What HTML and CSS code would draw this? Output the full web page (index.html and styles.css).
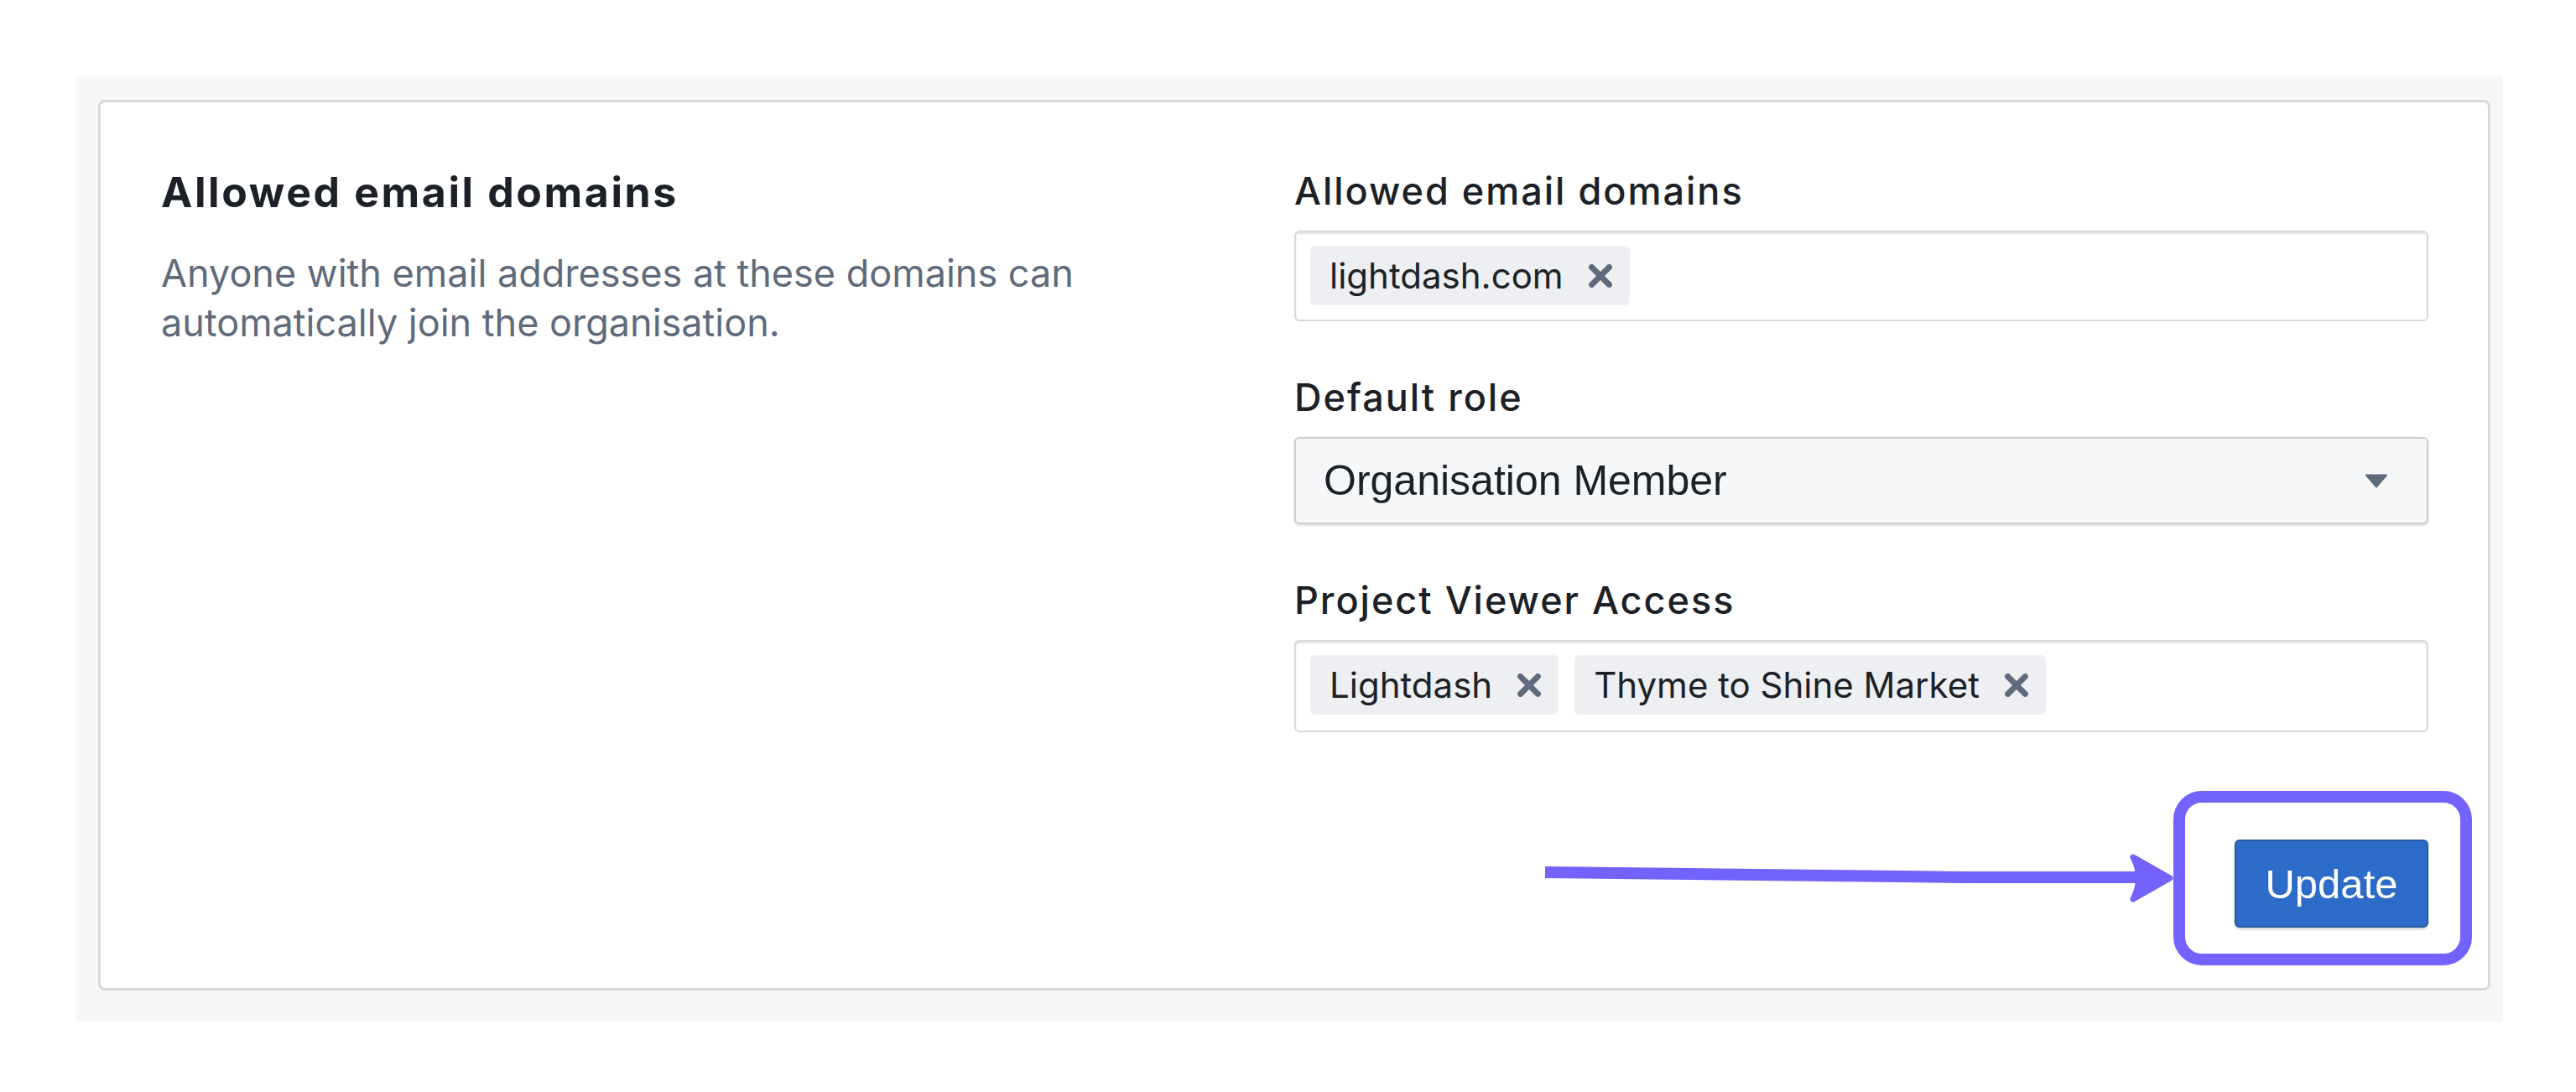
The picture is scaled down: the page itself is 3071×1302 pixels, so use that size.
FILE: index.html
```html
<!DOCTYPE html>
<html lang="en">
<head>
<meta charset="utf-8">
<title>Allowed email domains</title>
<link rel="stylesheet" href="styles.css">
</head>
<body>
<div class="page">
  <div class="panel">
    <div class="card">
      <div class="intro">
        <h5 class="title">Allowed email domains</h5>
        <p class="desc">Anyone with email addresses at these domains can automatically join the organisation.</p>
      </div>
      <div class="form">
        <div class="group">
          <label class="label">Allowed email domains</label>
          <div class="tag-input">
            <span class="tag"><span class="tag-text">lightdash.com</span><svg class="tag-x" viewBox="4 4 8 8"><path d="M9.41 8l2.29-2.29c.19-.18.3-.43.3-.71a1.003 1.003 0 00-1.71-.71L8 6.59l-2.29-2.3a1.003 1.003 0 00-1.42 1.42L6.59 8 4.3 10.29c-.19.18-.3.43-.3.71a1.003 1.003 0 001.71.71L8 9.41l2.29 2.29c.18.19.43.3.71.3a1.003 1.003 0 00.71-1.71L9.41 8z"/></svg></span>
          </div>
        </div>
        <div class="group">
          <label class="label">Default role</label>
          <div class="select">
            <span class="select-text">Organisation Member</span>
            <svg class="caret" viewBox="0 0 28 17"><path d="M2 1.5 H26 L14 15.5 Z"/></svg>
          </div>
        </div>
        <div class="group">
          <label class="label">Project Viewer Access</label>
          <div class="tag-input tag-input-tall">
            <span class="tag"><span class="tag-text">Lightdash</span><svg class="tag-x" viewBox="4 4 8 8"><path d="M9.41 8l2.29-2.29c.19-.18.3-.43.3-.71a1.003 1.003 0 00-1.71-.71L8 6.59l-2.29-2.3a1.003 1.003 0 00-1.42 1.42L6.59 8 4.3 10.29c-.19.18-.3.43-.3.71a1.003 1.003 0 001.71.71L8 9.41l2.29 2.29c.18.19.43.3.71.3a1.003 1.003 0 00.71-1.71L9.41 8z"/></svg></span>
            <span class="tag"><span class="tag-text">Thyme to Shine Market</span><svg class="tag-x" viewBox="4 4 8 8"><path d="M9.41 8l2.29-2.29c.19-.18.3-.43.3-.71a1.003 1.003 0 00-1.71-.71L8 6.59l-2.29-2.3a1.003 1.003 0 00-1.42 1.42L6.59 8 4.3 10.29c-.19.18-.3.43-.3.71a1.003 1.003 0 001.71.71L8 9.41l2.29 2.29c.18.19.43.3.71.3a1.003 1.003 0 00.71-1.71L9.41 8z"/></svg></span>
          </div>
        </div>
        <div class="actions">
          <button class="btn" type="button">Update</button>
        </div>
      </div>
    </div>
  </div>
  <svg class="annot" width="3071" height="1302" viewBox="0 0 3071 1302">
    <rect x="2598" y="950" width="342" height="194" rx="27" ry="27" fill="none" stroke="#7462fc" stroke-width="14"/>
    <path d="M1842 1040 L2340 1046 L2556 1046" fill="none" stroke="#7462fc" stroke-width="14"/>
    <path d="M2543 1022 L2587 1047 L2543 1072 Q2556 1047 2543 1022 Z" fill="#7462fc" stroke="#7462fc" stroke-width="7" stroke-linejoin="round"/>
  </svg>
</div>
</body>
</html>
```
FILE: styles.css
```css
html, body {
  margin: 0;
  padding: 0;
  background: #ffffff;
}

.page {
  position: relative;
  width: 3071px;
  height: 1302px;
  overflow: hidden;
  font-family: Inter, "Noto Sans", sans-serif;
  color: #1c2127;
}

.panel {
  margin: 90px 87px 0 91px;
  background: #f6f7f9;
  padding: 29px 15px 37px 26px;
}

.card {
  background: #ffffff;
  border: 3px solid #d6d8dc;
  border-radius: 8px;
  padding: 70px 71px 72px 72px;
  display: grid;
  grid-template-columns: 1fr 1352px;
  column-gap: 150px;
}

.intro {
  padding-top: 7px;
}

.title {
  margin: 0;
  font-size: 50px;
  line-height: 60px;
  font-weight: 700;
  letter-spacing: 2.6px;
  color: #1c2127;
}

.desc {
  margin: 37px 0 0;
  font-size: 45px;
  line-height: 59px;
  font-weight: 400;
  color: #5f6b7c;
}

.form {
  padding-top: 6px;
}

.group + .group {
  margin-top: 61px;
}

.label {
  display: block;
  font-size: 45px;
  line-height: 60px;
  font-weight: 500;
  letter-spacing: 2px;
  color: #1c2127;
  margin-bottom: 17px;
}

.tag-input {
  box-sizing: border-box;
  height: 108px;
  border: 2px solid #d6d9dd;
  border-radius: 6px;
  box-shadow: inset 0 2px 2px rgba(17, 20, 24, 0.12);
  background: #ffffff;
  display: flex;
  align-items: flex-start;
  gap: 19px;
  padding: 16px 17px;
}

.tag-input-tall {
  height: 110px;
}

.tag {
  display: inline-flex;
  align-items: center;
  height: 71px;
  box-sizing: border-box;
  padding: 0 21px 0 23px;
  background: #edeff2;
  border-radius: 6px;
  gap: 30px;
  font-size: 42px;
  color: #1c2127;
  white-space: nowrap;
}

.tag-x {
  width: 28px;
  height: 28px;
  fill: #5f6b7c;
  flex: none;
}

.select {
  box-sizing: border-box;
  height: 104px;
  border: 2px solid #c9cdd2;
  border-radius: 6px;
  background: #f6f7f9;
  box-shadow: 0 2px 3px rgba(17, 20, 24, 0.14);
  display: flex;
  align-items: center;
  justify-content: space-between;
  padding: 0 46px 0 33px;
  font-family: "Liberation Sans", Arial, sans-serif;
  font-size: 50px;
  color: #1c2127;
}

.caret {
  width: 28px;
  height: 17px;
  fill: #5f6b7c;
  stroke: #5f6b7c;
  stroke-width: 2;
  stroke-linejoin: round;
}

.actions {
  display: flex;
  justify-content: flex-end;
  margin-top: 128px;
}

.btn {
  width: 231px;
  height: 105px;
  border: 0;
  border-radius: 6px;
  background: #2d6bc8;
  color: #ffffff;
  font-family: "Liberation Sans", Arial, sans-serif;
  font-size: 49px;
  padding: 0;
  box-shadow: inset 0 0 0 2px rgba(17, 20, 24, 0.22), 0 2px 3px rgba(17, 20, 24, 0.2);
}

.annot {
  position: absolute;
  left: 0;
  top: 0;
  pointer-events: none;
}
```
